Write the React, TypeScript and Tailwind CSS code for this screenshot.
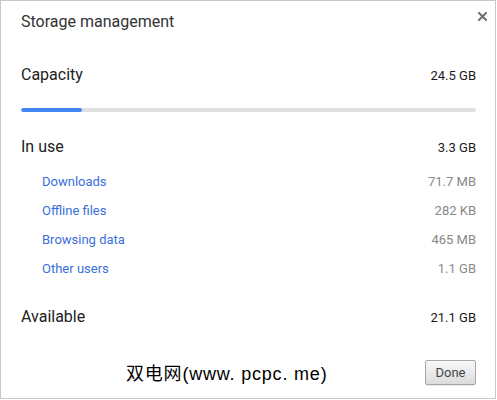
import React from "react";

const roboto = { fontFamily: "Roboto, 'Noto Sans', sans-serif" };

const items = [
  { label: "Downloads", value: "71.7 MB" },
  { label: "Offline files", value: "282 KB" },
  { label: "Browsing data", value: "465 MB" },
  { label: "Other users", value: "1.1 GB" },
];

function SummaryRow({ label, value }: { label: string; value: string }) {
  return (
    <div className="flex h-[20px] items-baseline justify-between leading-[20px]">
      <span className="text-[16px] text-[#222]">{label}</span>
      <span className="text-[13px] text-[#1a1a1a]">{value}</span>
    </div>
  );
}

export default function App() {
  return (
    <div className="bg-white" style={roboto}>
      <div className="relative flex h-[399px] w-[496px] flex-col border border-[#c8c8c8] pl-[20px] pr-[19px]">
        {/* close button */}
        <button className="absolute right-[8px] top-[10px] flex h-[10px] w-[10px] items-center justify-center">
          <svg width="9" height="9" viewBox="0 0 9 9">
            <path d="M1 1 L8 8 M8 1 L1 8" stroke="#707070" strokeWidth="2" strokeLinecap="square" />
          </svg>
        </button>

        <h1 className="mt-[11px] h-[20px] text-[16px] font-normal leading-[20px] text-[#333]">
          Storage management
        </h1>

        <div className="mt-[33px]">
          <SummaryRow label="Capacity" value="24.5 GB" />
        </div>

        <div className="mt-[23px] h-[4px] w-full overflow-hidden rounded-full bg-[#e0e0e0]">
          <div className="h-full w-[61px] rounded-full bg-[#4285f4]" />
        </div>

        <div className="mt-[25px]">
          <SummaryRow label="In use" value="3.3 GB" />
        </div>

        <div className="mt-[10px] flex flex-col">
          {items.map((it) => (
            <div key={it.label} className="flex h-[29px] items-baseline justify-between pl-[21px] text-[13px] leading-[29px]">
              <a className="cursor-pointer text-[#3b6fd9]">{it.label}</a>
              <span className="text-[#888]">{it.value}</span>
            </div>
          ))}
        </div>

        <div className="mt-[24px]">
          <SummaryRow label="Available" value="21.1 GB" />
        </div>

        <div className="relative mt-[33px] flex h-[25px] justify-end">
          <span
            className="absolute left-[105px] top-[3px] text-[18px] leading-[22px] tracking-[0.8px] text-black"
            style={{ fontFamily: "'Liberation Sans', 'Noto Sans CJK SC', sans-serif" }}
          >
            双电网(www. pcpc. me)
          </span>
          <button className="h-[25px] w-[51px] rounded-[2px] border border-[#a6a6a6] bg-gradient-to-b from-[#f8f8f8] to-[#dcdcdc] text-[13px] text-[#444] shadow-[0_1px_0_rgba(0,0,0,0.08)]">
            Done
          </button>
        </div>
      </div>
    </div>
  );
}
